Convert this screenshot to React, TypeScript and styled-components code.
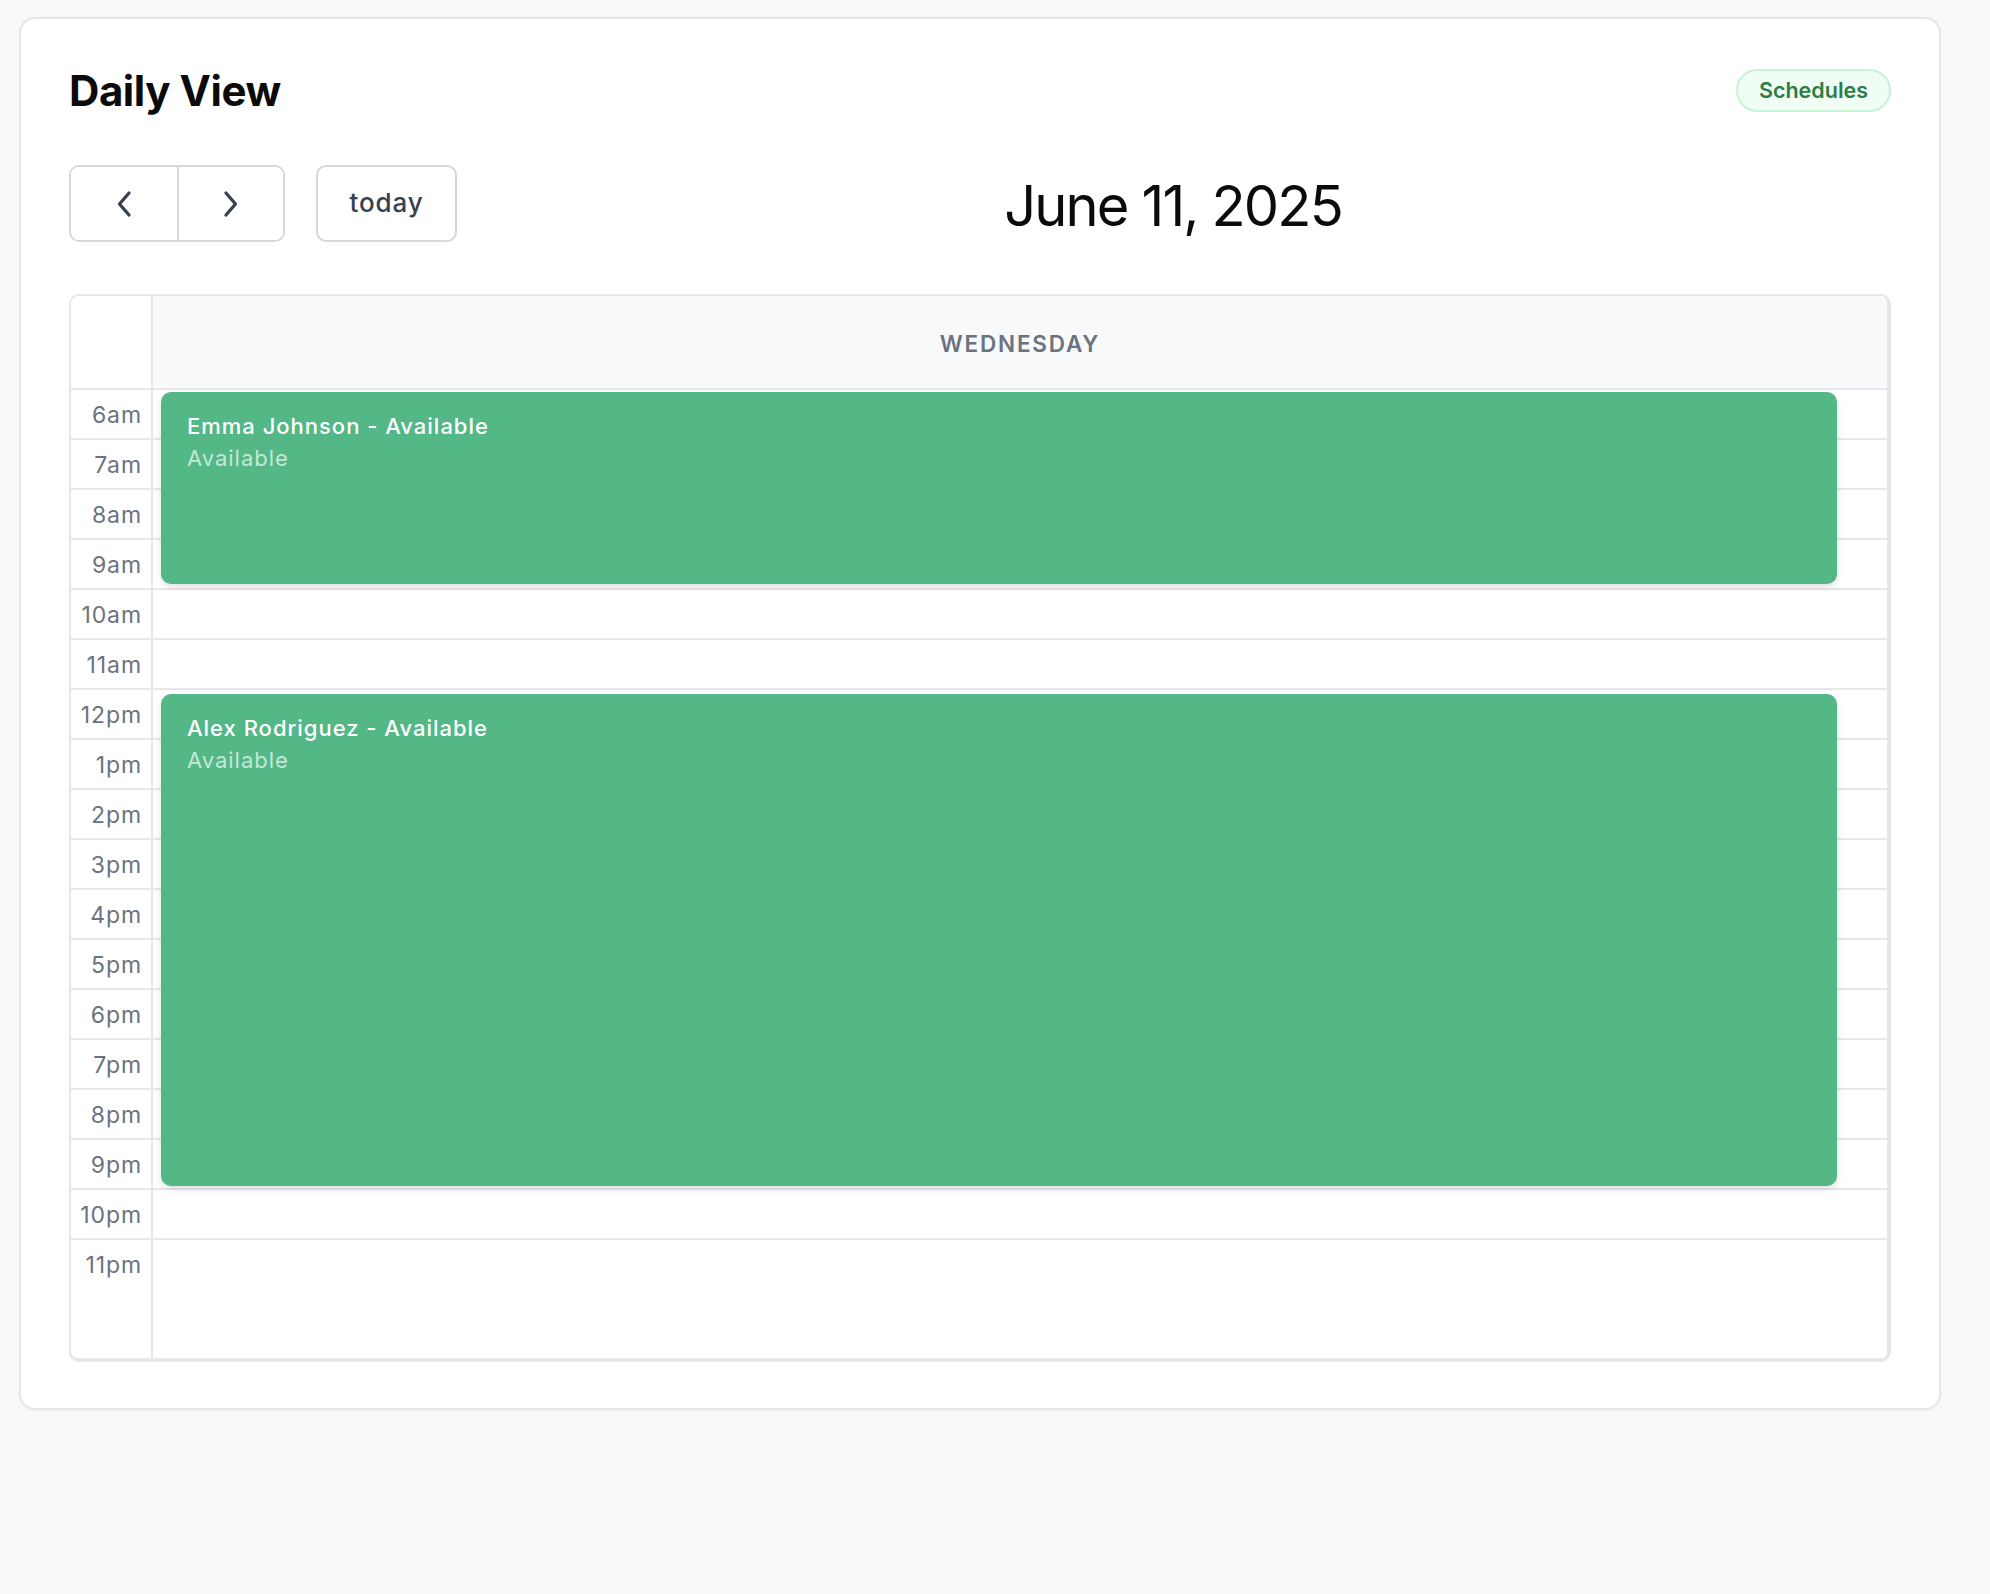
import React from "react";
import styled, { createGlobalStyle } from "styled-components";

const GlobalStyle = createGlobalStyle`
  html, body {
    margin: 0;
    padding: 0;
    background: #f9f9f9;
    font-family: Inter, "Noto Sans", "Liberation Sans", sans-serif;
  }
  * { box-sizing: border-box; }
`;

const Page = styled.div`
  padding: 17px 0 0 19px;
  min-height: 1594px;
`;

const Card = styled.section`
  width: 1922px;
  background: #ffffff;
  border: 2px solid #e6e6e6;
  border-radius: 16px;
  box-shadow: 0 1px 3px rgba(0, 0, 0, 0.04);
  padding: 40px 48px 46px 48px;
`;

const HeaderRow = styled.header`
  display: flex;
  align-items: center;
  justify-content: space-between;
  height: 62px;
`;

const Title = styled.h1`
  margin: 0;
  font-size: 42px;
  font-weight: 700;
  letter-spacing: -0.01em;
  color: #0b0b0b;
`;

const Badge = styled.span`
  display: inline-flex;
  align-items: center;
  justify-content: center;
  height: 43px;
  width: 155px;
  border-radius: 999px;
  background: #f0fdf4;
  border: 2px solid #c6f4d3;
  color: #2e7d44;
  font-size: 21.5px;
  font-weight: 600;
`;

const Toolbar = styled.div`
  display: flex;
  align-items: center;
  gap: 31px;
  margin-top: 44px;
  height: 77px;
`;

const ButtonGroup = styled.div`
  display: flex;
  height: 77px;
  border: 2px solid #d4d7dd;
  border-radius: 10px;
  overflow: hidden;
`;

const NavButton = styled.button<{ $divider?: boolean }>`
  width: 106px;
  height: 100%;
  display: flex;
  align-items: center;
  justify-content: center;
  background: #ffffff;
  border: none;
  border-left: ${(p) => (p.$divider ? "2px solid #d4d7dd" : "none")};
  padding: 0;
  color: #374151;
  cursor: pointer;
`;

const TodayButton = styled.button`
  width: 141px;
  height: 77px;
  background: #ffffff;
  border: 2px solid #d4d7dd;
  border-radius: 10px;
  color: #374151;
  font-family: Inter, "Noto Sans", sans-serif;
  font-size: 26px;
  font-weight: 500;
  letter-spacing: 0.035em;
  padding: 0 0 2px 0;
  cursor: pointer;
`;

const DateTitle = styled.h2`
  flex: 1;
  margin: 0;
  padding: 4px 33px 0 0;
  text-align: center;
  font-size: 56px;
  font-weight: 400;
  letter-spacing: -0.033em;
  color: #0b0b0b;
`;

const Calendar = styled.div`
  margin-top: 52px;
  height: 1068px;
  border-style: solid;
  border-color: #e5e7eb;
  border-width: 2px 4px 4px 2px;
  border-radius: 10px;
  overflow: hidden;
  display: flex;
  flex-direction: column;
`;

const HeadRow = styled.div`
  display: grid;
  grid-template-columns: 82px 1fr;
  height: 94px;
  border-bottom: 2px solid #e5e7eb;
`;

const GutterHead = styled.div`
  border-right: 2px solid #e5e7eb;
  background: #ffffff;
`;

const DayHead = styled.div`
  background: #f8f9fb;
  display: flex;
  align-items: center;
  justify-content: center;
  padding-top: 2px;
  color: #6b7280;
  font-size: 22.5px;
  font-weight: 600;
  letter-spacing: 0.08em;
`;

const Body = styled.div`
  position: relative;
  flex: 1;
  display: flex;
  flex-direction: column;
`;

const HourRow = styled.div<{ $last?: boolean }>`
  display: grid;
  grid-template-columns: 82px 1fr;
  height: ${(p) => (p.$last ? "auto" : "50px")};
  flex: ${(p) => (p.$last ? "1" : "none")};
  border-bottom: ${(p) => (p.$last ? "none" : "2px solid #e5e7eb")};
`;

const HourLabel = styled.div`
  border-right: 2px solid #e5e7eb;
  text-align: right;
  padding: 10px 9px 0 0;
  font-size: 23px;
  letter-spacing: 0.04em;
  line-height: 30px;
  color: #6b7280;
`;

const HourSlot = styled.div`
  background: #ffffff;
`;

const EventLayer = styled.div`
  position: absolute;
  top: 0;
  bottom: 0;
  left: 90px;
  right: 50px;
`;

const EventBlock = styled.div`
  position: absolute;
  left: 0;
  right: 0;
  background: #53b786;
  border-radius: 10px;
  box-shadow: 0 3px 6px rgba(0, 0, 0, 0.12);
  padding: 19px 26px;
  color: #ffffff;
`;

const EventTitle = styled.div`
  font-size: 22px;
  font-weight: 500;
  letter-spacing: 0.045em;
  line-height: 31.6px;
`;

const EventSub = styled.div`
  font-size: 22px;
  font-weight: 400;
  letter-spacing: 0.045em;
  line-height: 31.6px;
  color: rgba(255, 255, 255, 0.68);
`;

const Chevron = ({ dir }: { dir: "left" | "right" }) => (
  <svg width="18" height="28" viewBox="0 0 18 28" fill="none">
    <path
      d={dir === "left" ? "M14 3 L4.5 14 L14 25" : "M4 3 L13.5 14 L4 25"}
      stroke="currentColor"
      strokeWidth="3.3"
      strokeLinecap="round"
      strokeLinejoin="round"
    />
  </svg>
);

const hours = [
  "6am", "7am", "8am", "9am", "10am", "11am", "12pm", "1pm", "2pm", "3pm",
  "4pm", "5pm", "6pm", "7pm", "8pm", "9pm", "10pm", "11pm",
];

const events = [
  { name: "Emma Johnson", top: 2, height: 192 },
  { name: "Alex Rodriguez", top: 304, height: 492 },
];

export default function App() {
  return (
    <>
      <GlobalStyle />
      <Page>
        <Card>
          <HeaderRow>
            <Title>Daily View</Title>
            <Badge>Schedules</Badge>
          </HeaderRow>
          <Toolbar>
            <ButtonGroup>
              <NavButton aria-label="prev">
                <Chevron dir="left" />
              </NavButton>
              <NavButton $divider aria-label="next">
                <Chevron dir="right" />
              </NavButton>
            </ButtonGroup>
            <TodayButton>today</TodayButton>
            <DateTitle>June 11, 2025</DateTitle>
          </Toolbar>
          <Calendar>
            <HeadRow>
              <GutterHead />
              <DayHead>WEDNESDAY</DayHead>
            </HeadRow>
            <Body>
              {hours.map((h, i) => (
                <HourRow key={h} $last={i === hours.length - 1}>
                  <HourLabel>{h}</HourLabel>
                  <HourSlot />
                </HourRow>
              ))}
              <EventLayer>
                {events.map((e) => (
                  <EventBlock key={e.name} style={{ top: e.top, height: e.height }}>
                    <EventTitle>{e.name} - Available</EventTitle>
                    <EventSub>Available</EventSub>
                  </EventBlock>
                ))}
              </EventLayer>
            </Body>
          </Calendar>
        </Card>
      </Page>
    </>
  );
}
